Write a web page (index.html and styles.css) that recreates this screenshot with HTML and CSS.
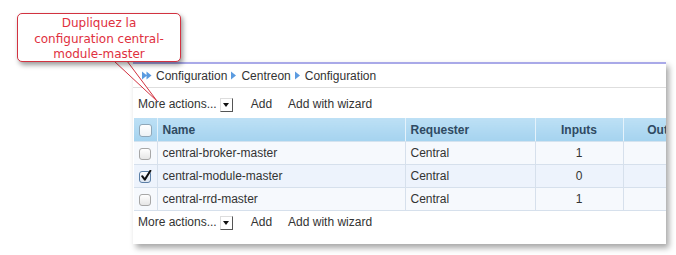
FILE: index.html
```html
<!DOCTYPE html>
<html>
<head>
<meta charset="utf-8">
<link rel="stylesheet" href="styles.css">
</head>
<body>
<div class="stage">
  <div class="panel">
    <div class="crumbs">
      <svg class="dbl" width="10" height="9" viewBox="0 0 10 9"><path d="M0 0.5 L5 4.5 L0 8.5 Z M4.5 0.5 L9.5 4.5 L4.5 8.5 Z" fill="#5b9be0"/></svg>
      <span>Configuration</span>
      <svg class="arr" width="5" height="9" viewBox="0 0 5 9"><path d="M0 0.5 L5 4.5 L0 8.5 Z" fill="#5b9be0"/></svg>
      <span>Centreon</span>
      <svg class="arr" width="5" height="9" viewBox="0 0 5 9"><path d="M0 0.5 L5 4.5 L0 8.5 Z" fill="#5b9be0"/></svg>
      <span>Configuration</span>
    </div>
    <div class="actions top">
      <span class="more">More actions...</span>
      <span class="sel"><svg width="6" height="4" viewBox="0 0 6 4"><path d="M0 0 L6 0 L3 4 Z" fill="#111"/></svg></span>
      <span class="add">Add</span>
      <span class="wiz">Add with wizard</span>
    </div>
    <table class="grid">
      <colgroup>
        <col class="c-chk"><col class="c-name"><col class="c-req"><col class="c-in"><col class="c-out">
      </colgroup>
      <thead>
        <tr>
          <th class="chk"><span class="box"></span></th>
          <th class="l">Name</th>
          <th class="l">Requester</th>
          <th>Inputs</th>
          <th>Outputs</th>
        </tr>
      </thead>
      <tbody>
        <tr class="odd">
          <td class="chk"><span class="box"></span></td>
          <td class="l">central-broker-master</td>
          <td class="l">Central</td>
          <td>1</td>
          <td></td>
        </tr>
        <tr class="even">
          <td class="chk"><span class="box on"><svg width="12" height="12" viewBox="0 0 12 12"><path d="M2.2 6.2 L4.8 9.6 L10.4 0.8" fill="none" stroke="#111" stroke-width="2" stroke-linecap="round" stroke-linejoin="round"/></svg></span></td>
          <td class="l">central-module-master</td>
          <td class="l">Central</td>
          <td>0</td>
          <td></td>
        </tr>
        <tr class="odd">
          <td class="chk"><span class="box"></span></td>
          <td class="l">central-rrd-master</td>
          <td class="l">Central</td>
          <td>1</td>
          <td></td>
        </tr>
      </tbody>
    </table>
    <div class="actions bottom">
      <span class="more">More actions...</span>
      <span class="sel"><svg width="6" height="4" viewBox="0 0 6 4"><path d="M0 0 L6 0 L3 4 Z" fill="#111"/></svg></span>
      <span class="add">Add</span>
      <span class="wiz">Add with wizard</span>
    </div>
  </div>
  <svg class="tail" width="60" height="50" viewBox="0 0 60 50"><polygon points="1,0 14,0 44,40" fill="#fff" stroke="#d23240" stroke-width="1"/></svg>
  <div class="callout">Dupliquez la<br>configuration central-<br>module-master</div>
</div>
</body>
</html>
```

FILE: styles.css
```css
html, body {
  margin: 0;
  padding: 0;
  background: #fff;
}

.stage {
  position: relative;
  width: 676px;
  height: 255px;
  overflow: hidden;
}

.panel {
  margin: 62px 0 0 133px;
  width: 533px;
  height: 182px;
  box-sizing: border-box;
  border-top: 2px solid #a9a9e8;
  background: #fff;
  overflow: hidden;
  box-shadow: 3px 4px 6px rgba(0, 0, 0, 0.35);
  font-family: "Liberation Sans", Arial, sans-serif;
  font-size: 12px;
  color: #333;
}

.crumbs {
  height: 23px;
  display: flex;
  align-items: center;
  padding-left: 9px;
  border-bottom: 1px solid #dedede;
}

.crumbs .dbl {
  margin-right: 4px;
}

.crumbs .arr {
  margin: 0 5px 0 4px;
}

.actions {
  display: flex;
  align-items: center;
  padding-left: 5px;
}

.actions.top {
  height: 29px;
  padding-top: 1px;
}

.actions.bottom {
  height: 22px;
}

.sel {
  display: inline-flex;
  align-items: center;
  justify-content: center;
  width: 11px;
  height: 12px;
  margin-left: 3px;
  margin-top: 2px;
  background: #fff;
  border: 1px solid #ddd;
  border-right: 1px solid #555;
  border-bottom: 1px solid #555;
}

.add {
  margin-left: 18px;
}

.wiz {
  margin-left: 16px;
}

.grid {
  margin-left: 1px;
  width: 583px;
  table-layout: fixed;
  border-collapse: collapse;
}

.c-chk { width: 23px; }
.c-name { width: 248px; }
.c-req { width: 130px; }
.c-in { width: 88px; }
.c-out { width: 94px; }

.grid th {
  height: 23px;
  padding: 0;
  background: linear-gradient(#bde0f5, #a5d3ef);
  border-left: 1px solid #e4f2fb;
  border-bottom: 1px solid #d4e3ef;
  color: #2f4a62;
  font-weight: bold;
  text-align: center;
}

.grid td {
  height: 22px;
  padding: 0;
  border: 1px solid #d6e0ec;
  text-align: center;
}

.grid .l {
  text-align: left;
  padding-left: 5px;
}

.grid tr.odd td {
  background: #f6f9fd;
}

.grid tr.even td {
  background: #edf3fc;
}

.grid td.chk,
.grid th.chk {
  text-align: center;
  vertical-align: middle;
  border-left: none;
}

.box {
  display: inline-block;
  vertical-align: middle;
  width: 10px;
  height: 10px;
  border: 1px solid #a7a7a7;
  border-radius: 3px;
  background: linear-gradient(#fff, #e6e6e6);
  position: relative;
}

th .box {
  width: 11px;
  height: 11px;
  border-color: #8fa7b8;
  background: linear-gradient(#fff, #eef2f5);
}

.box.on {
  border-color: #5c7fa6;
  background: linear-gradient(#fff, #dce6f2);
}

.box.on svg {
  position: absolute;
  left: 0;
  top: -2px;
}

.callout {
  position: absolute;
  left: 17px;
  top: 13px;
  width: 164px;
  height: 49px;
  box-sizing: border-box;
  border: 1.5px solid #d23240;
  border-radius: 5px;
  background: #fff;
  box-shadow: 2px 3px 5px rgba(0, 0, 0, 0.4);
  font-family: "DejaVu Sans", sans-serif;
  font-size: 12px;
  line-height: 15.5px;
  color: #e0303e;
  text-align: center;
  padding-top: 2px;
}

.tail {
  position: absolute;
  left: 113px;
  top: 61px;
  overflow: visible;
}
```
